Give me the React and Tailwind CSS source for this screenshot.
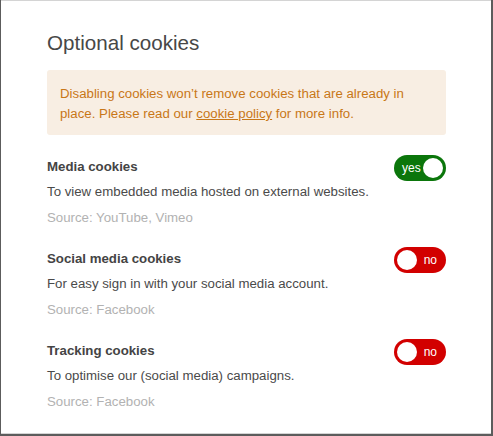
import { useState } from 'react';

const cookieGroups = [
  {
    id: 'media',
    title: 'Media cookies',
    text: 'To view embedded media hosted on external websites.',
    source: 'Source: YouTube, Vimeo',
    enabled: true,
  },
  {
    id: 'social',
    title: 'Social media cookies',
    text: 'For easy sign in with your social media account.',
    source: 'Source: Facebook',
    enabled: false,
  },
  {
    id: 'tracking',
    title: 'Tracking cookies',
    text: 'To optimise our (social media) campaigns.',
    source: 'Source: Facebook',
    enabled: false,
  },
];

function Toggle({ on, onClick }) {
  return (
    <button
      type="button"
      onClick={onClick}
      className={`flex h-[26px] w-[52px] shrink-0 items-center rounded-full px-[3px] ${
        on ? 'justify-between bg-[#0b760b] pl-[8px]' : 'justify-between bg-[#d20000] pr-[9px]'
      }`}
    >
      {on ? (
        <>
          <span className="text-[12px] leading-none text-white">yes</span>
          <span className="h-5 w-5 rounded-full bg-white" />
        </>
      ) : (
        <>
          <span className="h-5 w-5 rounded-full bg-white" />
          <span className="text-[12px] leading-none text-white">no</span>
        </>
      )}
    </button>
  );
}

export default function App() {
  const [groups, setGroups] = useState(cookieGroups);

  const toggle = (id) => {
    setGroups(groups.map((g) => (g.id === id ? { ...g, enabled: !g.enabled } : g)));
  };

  return (
    <div
      className="h-[436px] w-[493px] bg-[#5c5c5c] pb-[2px] pl-[1px] pr-[2px]"
      style={{ fontFamily: '"Liberation Sans", Arial, sans-serif' }}
    >
      <div className="h-full border-t border-b border-t-[#d4d4d4] border-b-[#d4d4d4] bg-white pl-[46px] pr-[45px] pt-[28px]">
        <h2 className="text-[20.6px] leading-[28px] text-[#474747]">Optional cookies</h2>

        <div className="mt-[13px] rounded-[3px] bg-[#f8eee3] px-[13px] pb-[11px] pt-[14px] text-[13.25px] leading-[20px] text-[#c87717]">
          Disabling cookies won’t remove cookies that are already in place. Please read our{' '}
          <a href="#" className="underline">cookie policy</a> for more info.
        </div>

        <div className="mt-[20px] flex flex-col gap-[19px]">
          {groups.map((g) => (
            <div key={g.id}>
              <div className="flex items-start justify-between">
                <h3 className="pt-[1px] text-[13.25px] font-bold leading-[22px] text-[#444]">{g.title}</h3>
                <Toggle on={g.enabled} onClick={() => toggle(g.id)} />
              </div>
              <p className="mt-[1px] text-[13.25px] leading-[20px] text-[#4a4a4a]">{g.text}</p>
              <p className="mt-[6px] text-[13.25px] leading-[20px] text-[#b2b2b2]">{g.source}</p>
            </div>
          ))}
        </div>
      </div>
    </div>
  );
}
